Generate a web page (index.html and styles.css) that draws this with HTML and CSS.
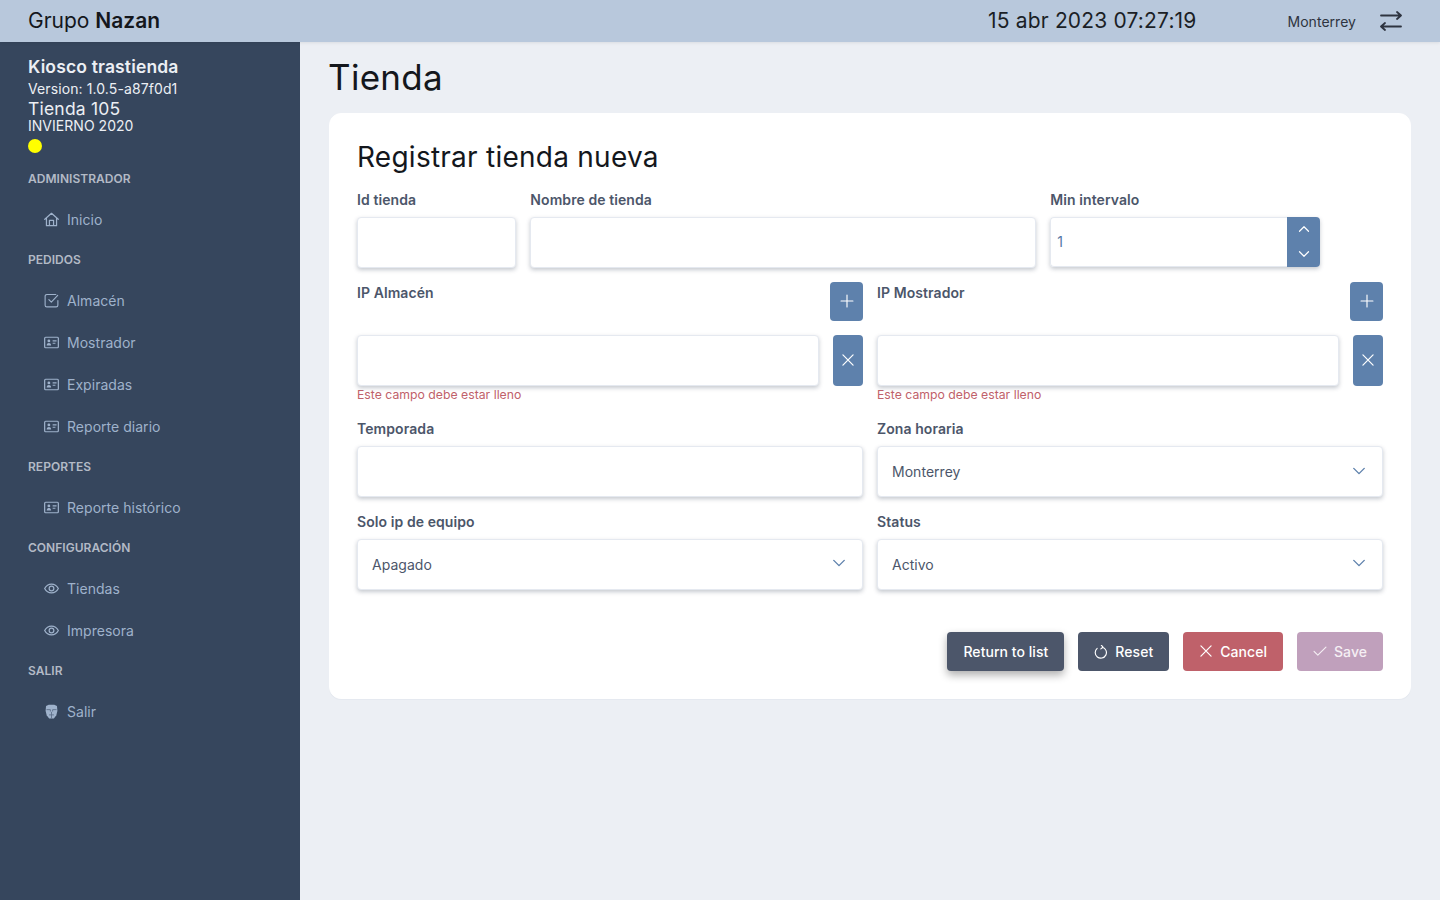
FILE: index.html
```html
<!DOCTYPE html>
<html lang="es">
<head>
  <meta charset="UTF-8">
  <meta name="viewport" content="width=device-width, initial-scale=1.0">
  <title>Grupo Nazan</title>
  <link rel="stylesheet" href="styles.css">
</head>
<body>

<svg class="icon-defs" width="0" height="0">
  <symbol id="i-home" viewBox="0 0 16 16"><path d="M.8 7.800 8 1.400l7.200 6.400M2.600 6.400v8.200h10.800V6.400M5.800 14.600V9h4.400v5.600" fill="none" stroke="currentColor" stroke-width="1.300" stroke-linejoin="round" stroke-linecap="round"/></symbol>
  <symbol id="i-check" viewBox="0 0 16 16"><path d="M14.800 8v5a1.800 1.800 0 0 1-1.800 1.800H3A1.800 1.800 0 0 1 1.200 13V3.400A1.800 1.800 0 0 1 3 1.600h9.600M5.200 7l2.600 2.800 6.800-7.200" fill="none" stroke="currentColor" stroke-width="1.200" stroke-linecap="round" stroke-linejoin="round"/></symbol>
  <symbol id="i-card" viewBox="0 0 16 16"><rect x=".7" y="2.400" width="14.600" height="11.200" rx="1" fill="none" stroke="currentColor" stroke-width="1.300"/><circle cx="5.200" cy="6.300" r="1.500" fill="currentColor"/><path d="M2.800 11.200c.2-2 1.200-2.700 2.400-2.700s2.200.7 2.400 2.700z" fill="currentColor"/><path d="M9.200 6.200h4.200M9.200 8.800h3" stroke="currentColor" stroke-width="1.200"/></symbol>
  <symbol id="i-eye" viewBox="0 0 16 16"><path d="M.7 8c1.700-3.200 4.200-4.700 7.300-4.700s5.600 1.500 7.300 4.700c-1.700 3.200-4.200 4.700-7.300 4.700S2.400 11.200.7 8z" fill="none" stroke="currentColor" stroke-width="1.300"/><circle cx="8" cy="8" r="2.500" fill="none" stroke="currentColor" stroke-width="1.300"/></symbol>
  <symbol id="i-mask" viewBox="0 0 16 16"><path d="M2.200 2 5 .8h6L13.800 2l.5 5.200-1.200 4.800-2.600 3.400H5.500L2.900 12 1.700 7.200z" fill="currentColor"/><path d="M2.600 6h4.200v2M13.400 6H9.200v2M8 8.400v7M5.400 11.600h5.200" fill="none" stroke="#5b6d87" stroke-width=".9"/></symbol>
  <symbol id="i-plus" viewBox="0 0 16 16"><path d="M8 1.200v13.600M1.200 8h13.600" fill="none" stroke="currentColor" stroke-width="1.300" stroke-linecap="round"/></symbol>
  <symbol id="i-times" viewBox="0 0 16 16"><path d="M2.200 2.200l11.600 11.600M13.800 2.200 2.200 13.800" fill="none" stroke="currentColor" stroke-width="1.400" stroke-linecap="round"/></symbol>
  <symbol id="i-chevron" viewBox="0 0 16 16"><path d="M2 5l6 6 6-6" fill="none" stroke="currentColor" stroke-width="1.600" stroke-linecap="round" stroke-linejoin="round"/></symbol>
</svg>

<header class="topbar">
  <div class="brand">Grupo <b>Nazan</b></div>
  <div class="clock">15 abr 2023 07:27:19</div>
  <div class="city">Monterrey</div>
  <svg class="swap" viewBox="0 0 22 20"><path d="M1 4.500h20M17 1l4 3.500L17 8M21 15.500H1M5 12l-4 3.500L5 19" fill="none" stroke="currentColor" stroke-width="1.800" stroke-linecap="round" stroke-linejoin="round"/></svg>
</header>

<div class="layout">
  <aside class="sidebar">
    <div class="kiosk-info">
      <div class="kiosk-name">Kiosco trastienda</div>
      <div class="kiosk-version">Version: 1.0.5-a87f0d1</div>
      <div class="kiosk-store">Tienda 105</div>
      <div class="kiosk-season">INVIERNO 2020</div>
      <span class="status-dot"></span>
    </div>

    <div class="menu-title">ADMINISTRADOR</div>
    <a class="menu-item"><svg><use href="#i-home"/></svg>Inicio</a>

    <div class="menu-title">PEDIDOS</div>
    <a class="menu-item"><svg><use href="#i-check"/></svg>Almacén</a>
    <a class="menu-item"><svg><use href="#i-card"/></svg>Mostrador</a>
    <a class="menu-item"><svg><use href="#i-card"/></svg>Expiradas</a>
    <a class="menu-item"><svg><use href="#i-card"/></svg>Reporte diario</a>

    <div class="menu-title">REPORTES</div>
    <a class="menu-item"><svg><use href="#i-card"/></svg>Reporte histórico</a>

    <div class="menu-title">CONFIGURACIÓN</div>
    <a class="menu-item"><svg><use href="#i-eye"/></svg>Tiendas</a>
    <a class="menu-item"><svg><use href="#i-eye"/></svg>Impresora</a>

    <div class="menu-title">SALIR</div>
    <a class="menu-item"><svg><use href="#i-mask"/></svg>Salir</a>
  </aside>

  <main class="content">
    <h1 class="page-title">Tienda</h1>

    <section class="card">
      <h2 class="card-title">Registrar tienda nueva</h2>

      <div class="form-row row-top">
        <div class="field col-2">
          <label>Id tienda</label>
          <div class="input"></div>
        </div>
        <div class="field col-6">
          <label>Nombre de tienda</label>
          <div class="input"></div>
        </div>
        <div class="field col-4">
          <label>Min intervalo</label>
          <div class="spinner">
            <div class="spinner-value">1</div>
            <div class="spinner-btns">
              <svg class="flip"><use href="#i-chevron"/></svg>
              <svg><use href="#i-chevron"/></svg>
            </div>
          </div>
        </div>
      </div>

      <div class="form-row row-ip">
        <div class="field col-6">
          <div class="ip-head">
            <label>IP Almacén</label>
            <button class="btn-square btn-add"><svg><use href="#i-plus"/></svg></button>
          </div>
          <div class="ip-line">
            <div class="input"></div>
            <button class="btn-square btn-del"><svg><use href="#i-times"/></svg></button>
          </div>
          <small class="error">Este campo debe estar lleno</small>
        </div>
        <div class="field col-6">
          <div class="ip-head">
            <label>IP Mostrador</label>
            <button class="btn-square btn-add"><svg><use href="#i-plus"/></svg></button>
          </div>
          <div class="ip-line">
            <div class="input"></div>
            <button class="btn-square btn-del"><svg><use href="#i-times"/></svg></button>
          </div>
          <small class="error">Este campo debe estar lleno</small>
        </div>
      </div>

      <div class="form-row row-season">
        <div class="field col-6">
          <label>Temporada</label>
          <div class="input"></div>
        </div>
        <div class="field col-6">
          <label>Zona horaria</label>
          <div class="input select">Monterrey<svg><use href="#i-chevron"/></svg></div>
        </div>
      </div>

      <div class="form-row row-status">
        <div class="field col-6">
          <label>Solo ip de equipo</label>
          <div class="input select short">Apagado<svg><use href="#i-chevron"/></svg></div>
        </div>
        <div class="field col-6">
          <label>Status</label>
          <div class="input select short">Activo<svg><use href="#i-chevron"/></svg></div>
        </div>
      </div>

      <div class="actions">
        <button class="btn btn-dark btn-raised">Return to list</button>
        <button class="btn btn-dark">
          <svg viewBox="0 0 16 16"><path d="M9.600 2.500a6.400 6.400 0 1 1-6 1.300M8.400 .2l1.900 2.300-2.500 1.900" fill="none" stroke="currentColor" stroke-width="1.300" stroke-linecap="round" stroke-linejoin="round"/></svg>Reset
        </button>
        <button class="btn btn-red btn-lifted"><svg><use href="#i-times"/></svg>Cancel</button>
        <button class="btn btn-save btn-lifted">
          <svg viewBox="0 0 16 16"><path d="M1.200 8.500l4.300 4.300 9.300-9.300" fill="none" stroke="currentColor" stroke-width="1.300" stroke-linecap="round" stroke-linejoin="round"/></svg>Save
        </button>
      </div>
    </section>
  </main>
</div>

</body>
</html>
```

FILE: styles.css
```css
* {
  box-sizing: border-box;
}
body {
  margin: 0;
  font-family: Inter, "Liberation Sans", sans-serif;
  background-color: #eceff4;
  color: #2e3440;
  letter-spacing: 0.03px;
}
.icon-defs {
  display: block;
  height: 0;
}

/* top bar */
.topbar {
  display: flex;
  align-items: center;
  height: 42px;
  padding: 0 38px 2px 28px;
  background: #b8c8dc;
  box-shadow: 0 1px 3px rgba(0, 0, 0, 0.08);
  position: relative;
}
.brand {
  font-size: 21px;
  letter-spacing: 0;
  color: #14171c;
}
.brand b {
  font-weight: 600;
}
.clock {
  margin-left: auto;
  font-size: 21px;
  letter-spacing: 0.17px;
  color: #1b1f26;
}
.city {
  margin: 2px 24px 0 91px;
  font-size: 14px;
  color: #2e3440;
}
.swap {
  width: 22px;
  height: 20px;
  margin-top: 2px;
  color: #2e3440;
}

.layout {
  display: flex;
  min-height: 858px;
}

/* sidebar */
.sidebar {
  width: 300px;
  flex-shrink: 0;
  padding: 14px 28px 0;
  background: #36465d;
  color: #eceff4;
}
.kiosk-info {
  margin-bottom: 18px;
}
.kiosk-name {
  font-size: 17.5px;
  font-weight: 600;
  line-height: 22px;
  letter-spacing: 0.15px;
}
.kiosk-version {
  font-size: 14px;
  line-height: 22px;
  letter-spacing: 0.1px;
}
.kiosk-store {
  font-size: 17.5px;
  line-height: 16px;
  margin-top: 1px;
  letter-spacing: 0.2px;
}
.kiosk-season {
  font-size: 14px;
  line-height: 20px;
  margin-top: -1px;
}
.status-dot {
  display: block;
  width: 14px;
  height: 14px;
  margin-top: 3px;
  border-radius: 50%;
  background: #ffff00;
}
.menu-title {
  font-size: 12px;
  font-weight: 600;
  line-height: 15px;
  color: #b3bac6;
  height: 15px;
}
.menu-item {
  display: flex;
  align-items: center;
  height: 42px;
  padding-left: 16px;
  font-size: 14px;
  color: #9fb2cb;
}
.menu-item svg {
  width: 15px;
  height: 15px;
  margin-right: 8px;
}
.menu-title + .menu-item {
  margin-top: 12px;
}
.menu-item + .menu-title {
  margin-top: 12px;
}

/* main */
.content {
  flex: 1;
  padding: 14px 29px 0;
}
.page-title {
  margin: 0 0 14px -1px;
  font-size: 35px;
  font-weight: 400;
  line-height: 43px;
  letter-spacing: 0.3px;
  color: #14171c;
}
.card {
  padding: 27px 27px 28px;
  height: 586px;
  background: #fff;
  border: 1px solid #fff;
  border-radius: 12px;
  box-shadow: 0 1px 0 #e5e9f0;
}
.card-title {
  margin: 0 0 18px;
  font-size: 28px;
  font-weight: 400;
  line-height: 32px;
  letter-spacing: 0.25px;
  color: #14171c;
}

/* form */
.form-row {
  display: grid;
  grid-template-columns: repeat(12, 1fr);
  column-gap: 14px;
}
.col-2 { grid-column: span 2; }
.col-4 { grid-column: span 4; }
.col-6 { grid-column: span 6; }
.field label {
  display: block;
  font-size: 14px;
  font-weight: 600;
  line-height: 17px;
  letter-spacing: 0.08px;
  margin-bottom: 9px;
  color: #4c566a;
}
.input {
  height: 51px;
  background: #fff;
  border: 1px solid #e5e9f0;
  border-radius: 4px;
  box-shadow: 0 2px 4px rgba(76, 86, 106, 0.32);
}
.select {
  display: flex;
  align-items: center;
  justify-content: space-between;
  padding: 0 16px 0 14px;
  font-size: 14px;
  color: #4c566a;
}
.select.short {
  padding-bottom: 1px;
}
.select svg {
  width: 14px;
  height: 14px;
  color: #5e81ac;
  margin-top: -2px;
}
.spinner {
  display: flex;
  width: 270px;
  height: 50px;
  border-radius: 4px;
  box-shadow: 0 2px 4px rgba(76, 86, 106, 0.32);
}
.spinner-value {
  flex: 1;
  display: flex;
  align-items: center;
  padding: 0 0 1px 6px;
  font-size: 14px;
  color: #5677a6;
  border: 1px solid #e5e9f0;
  border-right: 0;
  border-radius: 4px 0 0 4px;
}
.spinner-btns {
  width: 33px;
  display: flex;
  flex-direction: column;
  align-items: center;
  justify-content: space-around;
  padding: 0 0 1px;
  background: #5e81ac;
  color: #fff;
  border-radius: 0 4px 4px 0;
}
.spinner-btns svg {
  width: 12px;
  height: 12px;
}
.spinner-btns .flip {
  transform: rotate(180deg);
}
.row-ip {
  margin-top: 14px;
}
.ip-head {
  display: flex;
  justify-content: space-between;
  height: 39px;
  margin-bottom: 14px;
}
.ip-head label {
  margin: 2px 0 0;
}
.ip-line {
  display: flex;
  gap: 14px;
}
.ip-line .input {
  flex: 1;
}
.btn-square {
  display: flex;
  align-items: center;
  justify-content: center;
  padding: 0 0 2px;
  border: 0;
  border-radius: 4px;
  background: #5e81ac;
  color: #fff;
}
.btn-square svg {
  width: 14px;
  height: 14px;
}
.btn-add {
  width: 33px;
  height: 39px;
}
.btn-del {
  width: 30px;
  height: 51px;
}
.error {
  display: block;
  font-size: 12.25px;
  line-height: 17px;
  letter-spacing: 0;
  color: #bf616a;
}
.row-season {
  margin-top: 17px;
}
.row-status {
  margin-top: 16px;
}

/* buttons */
.actions {
  display: flex;
  justify-content: flex-end;
  gap: 14px;
  margin-top: 42px;
}
.btn {
  display: flex;
  align-items: center;
  height: 39px;
  padding: 0 16px;
  border: 0;
  border-radius: 4px;
  font-family: inherit;
  font-size: 14px;
  font-weight: 500;
  letter-spacing: 0.05px;
  color: #fff;
}
.btn svg {
  width: 14px;
  height: 14px;
  margin-right: 7px;
}
.btn-lifted svg {
  margin-top: -2px;
}
.btn-dark {
  background: #4c566a;
}
.btn-raised {
  box-shadow: 0 4px 8px rgba(0, 0, 0, 0.32);
}
.btn-red {
  background: #bf616a;
}
.btn-save {
  background: #c0a0bc;
  color: #f5eff4;
}
```
